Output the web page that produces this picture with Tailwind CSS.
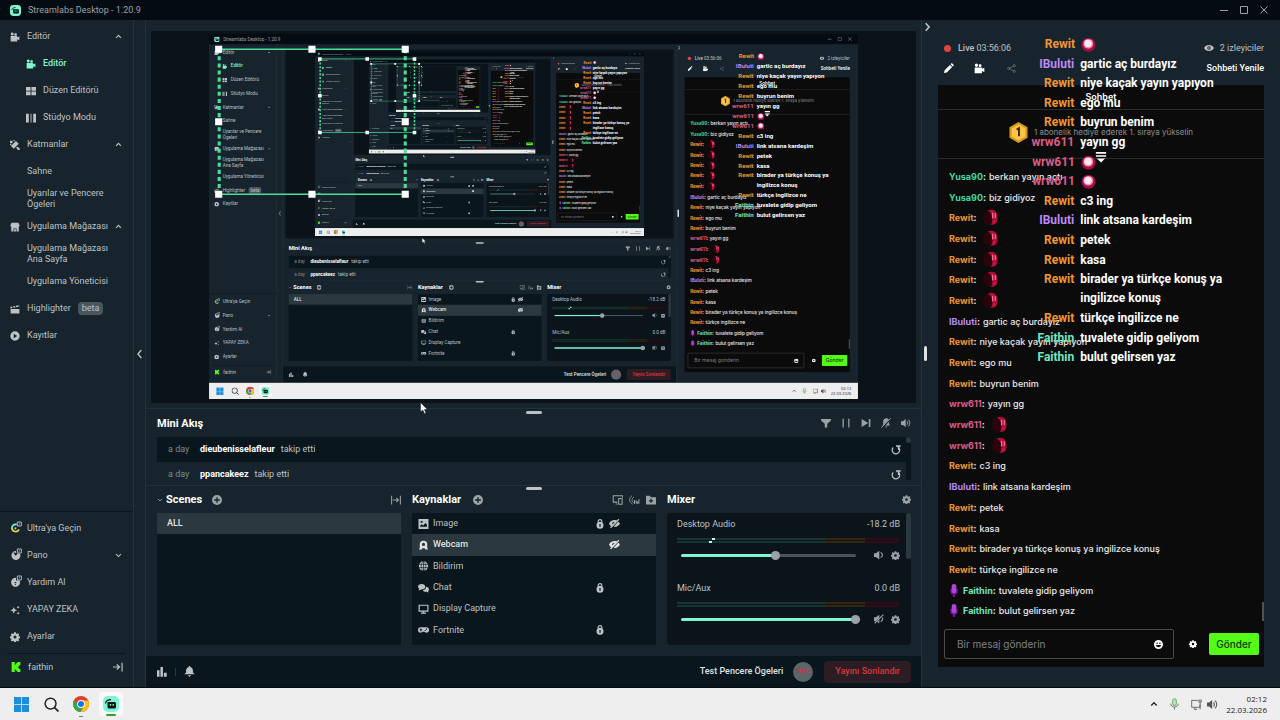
<!DOCTYPE html>
<html lang="tr">
  <head>
    <meta charset="UTF-8" />
    <meta name="viewport" content="width=device-width, initial-scale=1" />
    <title>Streamlabs Desktop</title>
    <script src="https://cdn.jsdelivr.net/npm/@tailwindcss/browser@4"></script>
  </head>
  <body class="h-screen overflow-hidden bg-[#09161d]">
    <!-- Icon set -->
    <svg class="hidden">
      <symbol id="i-camera" viewBox="0 0 16 16"><path fill="currentColor" d="M1 6.5h10.500v2l3.500-1.500v6l-3.500-1.500V15H1zM2.500 1.500h2.500v4H2.500zM7.500 2.500h3v3h-3z"/><circle cx="3.500" cy="3" r="2.300" fill="currentColor"/><circle cx="8.800" cy="3.800" r="1.900" fill="currentColor"/></symbol>
      <symbol id="i-grid" viewBox="0 0 16 16"><path fill="currentColor" d="M0 1.500h7.300v6H0zM8.700 1.500H16v6H8.700zM0 8.900h7.300v6H0zM8.700 8.900H16v6H8.700z"/></symbol>
      <symbol id="i-studio" viewBox="0 0 16 16"><path fill="currentColor" d="M0 1h4.500v14H0zM7.300 1h1.500v14H7.300zM11.500 1H16v14h-4.500z"/></symbol>
      <symbol id="i-tools" viewBox="0 0 16 16"><path fill="currentColor" d="M9.500 1.500 14 6 6 14 1.500 9.500zM0 1h4v4H0zM5.500 0h2v2h-2zM0 6.500h2v2H0zM11.500 10.500 15.500 13v3h-3l-2.500-3.500z"/></symbol>
      <symbol id="i-store" viewBox="0 0 16 16"><path fill="currentColor" d="M2.500 1h11L15.500 5.500a2 2 0 0 1-1.500 2V15h-3.500v-4.500h-5V15H2V7.500a2 2 0 0 1-1.500-2zM6.500 11.500h3V15h-3z"/></symbol>
      <symbol id="i-clap" viewBox="0 0 16 16"><path fill="currentColor" d="M1 8h14v7H1zM.5 4.500 2.800 4l1.500 2.500L1 7.200zM4.500 3.600l3-.6 1.500 2.500-3 .6zM9 2.700l3-.6 1.500 2.500-3 .6zM13 1.800l1.500-.3.700 3h-.7z"/></symbol>
      <symbol id="i-play" viewBox="0 0 16 16"><path fill="currentColor" fill-rule="evenodd" d="M8 .5a7.500 7.500 0 1 1 0 15 7.500 7.500 0 0 1 0-15zM6 4.500v7L11.500 8z"/></symbol>
      <symbol id="i-up" viewBox="0 0 16 16"><path fill="none" stroke="currentColor" stroke-width="2.600" d="m2.500 11 5.500-5.500L13.500 11"/></symbol>
      <symbol id="i-down" viewBox="0 0 16 16"><path fill="none" stroke="currentColor" stroke-width="2.400" d="M2.500 5 8 10.500 13.500 5"/></symbol>
      <symbol id="i-left" viewBox="0 0 8 16"><path fill="none" stroke="currentColor" stroke-width="2.200" d="M7 1.500 1.500 8 7 14.500"/></symbol>
      <symbol id="i-right" viewBox="0 0 8 16"><path fill="none" stroke="currentColor" stroke-width="2.600" d="M1 2l5.500 6L1 14"/></symbol>
      <symbol id="i-ultra" viewBox="0 0 18 18"><path fill="none" stroke="#80f5d2" stroke-width="2.600" d="M3 12a5.500 5.500 0 0 1 7-6.500"/><path fill="none" stroke="#ddd54e" stroke-width="2.600" d="M3 11a5.500 5.500 0 0 0 10.500 1.500"/><circle cx="8" cy="11" r="1.700" fill="currentColor"/><path fill="none" stroke="currentColor" stroke-width="1.400" d="M11 1.500h6v6h-6zM13 5.500l2-2"/></symbol>
      <symbol id="i-dash" viewBox="0 0 18 18"><path fill="currentColor" d="M9 4.500v3l-4-1 3 5 2.500-1.500-.5-1.500h5A6.700 6.700 0 1 1 9 4.500z"/><path fill="none" stroke="currentColor" stroke-width="1.400" d="M11 1.500h6v6h-6zM13 5.500l2-2"/></symbol>
      <symbol id="i-help" viewBox="0 0 18 18"><path fill="currentColor" fill-rule="evenodd" d="M9 4.300v4h5.500A6.700 6.700 0 1 1 9 4.300zM7 13v1.700h2V13zm0-1h1.700l1.500-1.500H7z"/><path fill="none" stroke="currentColor" stroke-width="1.400" d="M11 1.500h6v6h-6zM13 5.500l2-2"/></symbol>
      <symbol id="i-spark" viewBox="0 0 16 16"><path fill="currentColor" d="M6 3l1.600 3.900L11.500 8.500l-3.900 1.600L6 14l-1.600-3.900L.5 8.500l3.900-1.600zM13 1l.8 1.700 1.700.8-1.700.8L13 6l-.8-1.700-1.700-.8 1.700-.8zM13 10.500l.8 1.700 1.700.8-1.700.8-.8 1.700-.8-1.700-1.700-.8 1.700-.8z"/></symbol>
      <symbol id="i-gear" viewBox="0 0 16 16"><path fill="currentColor" fill-rule="evenodd" d="M6.600.5h2.800l.5 2 1.100.5 1.800-1.100 2 2-1.100 1.800.4 1 2 .5v2.600l-2 .5-.4 1.100 1.100 1.800-2 2-1.800-1.100-1.100.4-.5 2H6.600l-.5-2-1.100-.4-1.800 1.100-2-2 1.100-1.800-.4-1.100-2-.5V7.200l2-.5.4-1-1.100-1.800 2-2L5 3l1.100-.5zM8 5.600a2.400 2.400 0 1 0 0 4.800 2.400 2.400 0 0 0 0-4.800z"/></symbol>
      <symbol id="i-kick" viewBox="0 0 16 16"><path fill="#53fc18" d="M1 0h5v4h2V2h2V0h5v5h-2v2h-2v2h2v2h2v5h-5v-2H8v-2H6v4H1z"/></symbol>
      <symbol id="i-exit" viewBox="0 0 16 16"><path fill="none" stroke="currentColor" stroke-width="1.900" d="M0 8h10M6 4l4.500 4L6 12M14.500 1v14"/></symbol>
      <symbol id="i-filter" viewBox="0 0 16 16"><path fill="currentColor" d="M0 1.500h16v2.300L10 9v6H6V9L0 3.800z"/></symbol>
      <symbol id="i-pause" viewBox="0 0 16 16"><path fill="currentColor" d="M2.500 1h2v14h-2zM11.500 1h2v14h-2z"/></symbol>
      <symbol id="i-next" viewBox="0 0 16 16"><path fill="currentColor" d="M1 1.500 11.500 8 1 14.500zM12.500 1.500H15v13h-2.500z"/></symbol>
      <symbol id="i-mute" viewBox="0 0 16 16"><path fill="currentColor" d="M3 12 12.500 2.500A5 5 0 0 0 3.500 6v3.500L2 12zM7 12l6-6v4l1.500 2zM6.500 13.500h4L8.500 15.500z"/><path stroke="currentColor" stroke-width="1.500" d="M.5 15.500l15-15"/></symbol>
      <symbol id="i-sound" viewBox="0 0 16 16"><path fill="currentColor" d="M0 5h3l4.500-3.500v13L3 11H0z"/><path fill="none" stroke="currentColor" stroke-width="1.500" d="M9.500 5a4.500 4.500 0 0 1 0 6M11.500 2.500a7 7 0 0 1 0 11"/></symbol>
      <symbol id="i-replay" viewBox="0 0 16 16"><path fill="none" stroke="currentColor" stroke-width="2" d="M3.500 4A6 6 0 1 0 11 3"/><path fill="currentColor" d="M8 .5h7.500v2.300h-2.300V8H11V2.800H8z"/></symbol>
      <symbol id="i-plus" viewBox="0 0 16 16"><path fill="currentColor" fill-rule="evenodd" d="M8 0a8 8 0 1 1 0 16A8 8 0 0 1 8 0zM6.900 3.500v3.400H3.500v2.200h3.400v3.400h2.200V9.100h3.400V6.900H9.100V3.500z"/></symbol>
      <symbol id="i-fit" viewBox="0 0 16 16"><path fill="none" stroke="currentColor" stroke-width="1.700" d="M1 1v14M15 1v14M3 8h8M8.500 4.500 12 8l-3.500 3.500"/></symbol>
      <symbol id="i-image" viewBox="0 0 16 16"><path fill="currentColor" fill-rule="evenodd" d="M0 0h16v16H0zM2.500 12.500h11V9L11 6.500l-3.500 4L5 8.500l-2.500 2.500zM3.500 3v3h3V3z"/></symbol>
      <symbol id="i-webcam" viewBox="0 0 16 16"><path fill="currentColor" fill-rule="evenodd" d="M8 1a6 6 0 0 1 6 6v6l1 1v1h-4l-1-2H6l-1 2H1v-1l1-1V7a6 6 0 0 1 6-6zm0 3.500a2.600 2.600 0 1 0 0 5.200 2.600 2.600 0 0 0 0-5.200z"/></symbol>
      <symbol id="i-globe" viewBox="0 0 16 16"><circle cx="8" cy="8" r="7.500" fill="currentColor"/><path fill="none" stroke="#09161d" d="M0 5.500h16M0 10.500h16M8 0v16M8 0c-5 5-5 11 0 16M8 0c5 5 5 11 0 16"/></symbol>
      <symbol id="i-chat" viewBox="0 0 18 16"><path fill="currentColor" d="M6 1.500c3.500 0 6 2 6 4.500s-2.500 4.500-6 4.500L1 12l1-2.700A4 4 0 0 1 0 6c0-2.500 2.500-4.500 6-4.500zM13.300 6c2.700 0 4.700 1.700 4.700 4 0 1.300-.6 2.400-1.500 3.100l1 2.400-4-1.200c-3 0-5-1.200-5.500-2.800 3.500-.5 5.300-2.500 5.300-5.500z"/></symbol>
      <symbol id="i-monitor" viewBox="0 0 16 16"><path fill="none" stroke="currentColor" stroke-width="1.900" d="M1 2h14v9.500H1zM4 14.500h8M8 11v3.500"/></symbol>
      <symbol id="i-pad" viewBox="0 0 18 16"><path fill="currentColor" fill-rule="evenodd" d="M4.500 3.500h9a4.500 4.500 0 0 1 0 9c-1.500 0-2-1.500-3-1.500h-3c-1 0-1.500 1.500-3 1.500a4.500 4.500 0 0 1 0-9zM4 5.500V7H2.500v1.600H4V10h1.600V8.600H7V7H5.600V5.500zM11 8v1.700h1.700V8zM13 5.700v1.700h1.700V5.700z"/></symbol>
      <symbol id="i-lock" viewBox="0 0 14 16"><path fill="none" stroke="currentColor" stroke-width="1.800" d="M4 6V4a3 3 0 0 1 6 0v2"/><path fill="currentColor" fill-rule="evenodd" d="M7 4.500a5.600 5.600 0 1 1 0 11.200 5.600 5.600 0 0 1 0-11.200zM6 8v4.300h2V8z"/></symbol>
      <symbol id="i-hide" viewBox="0 0 16 16"><path fill="currentColor" fill-rule="evenodd" d="M0 8c2-4 6-6 11-4.500L14 1l1 1.500L3 15 1.500 14l1.700-2C1.700 11 .5 9.700 0 8zM7.500 5.300a3 3 0 0 0-2.600 4L6.300 8A1.500 1.500 0 0 1 8 6.500zM13.300 5.500C14.500 6.300 15.600 7 16 8c-2 4-5.500 5.400-9.300 4.800z"/></symbol>
      <symbol id="i-screens" viewBox="0 0 18 16"><path fill="none" stroke="currentColor" stroke-width="1.700" d="M9 11.500H2V1h15v3M6 14.500h3M11 5.500h5.500v9.500H11z"/></symbol>
      <symbol id="i-wave" viewBox="0 0 18 16"><path fill="none" stroke="currentColor" stroke-width="1.300" d="M5 1C-1 4 0 12 6 15M8 3.500C4 5 4 11 7.500 12.500"/><path fill="currentColor" d="M8 8h2v6H8zM11 9h1.500v5H11zM13 10h2v4h-2zM15.500 6.500H17V14h-1.500z"/></symbol>
      <symbol id="i-folder" viewBox="0 0 16 16"><path fill="currentColor" fill-rule="evenodd" d="M0 1h6l2 2.500h8V15H0zM7 6v2.300H4.700v2H7v2.200h2v-2.200h2.300v-2H9V6z"/></symbol>
      <symbol id="i-speaker" viewBox="0 0 16 16"><path fill="currentColor" d="M0 5h3l5.500-4v14L3 11H0z"/><path fill="none" stroke="currentColor" stroke-width="1.700" d="M10.500 4c4 1 4 7 0 8"/></symbol>
      <symbol id="i-nospeaker" viewBox="0 0 16 16"><path fill="currentColor" d="M0 5h3l5.500-4v5L2.500 12 0 11zM5 12.500l3.500-3.500v6z"/><path fill="none" stroke="currentColor" stroke-width="1.900" d="M1 15 15 1M10.500 12c3.500-1 4-4 2.800-6"/></symbol>
      <symbol id="i-bars" viewBox="0 0 16 16"><path fill="currentColor" d="M0 5h4v10.500H0zM5.500 0h4v15.500h-4zM11 9h4.500v6.500H11z"/></symbol>
      <symbol id="i-bell" viewBox="0 0 16 16"><path fill="currentColor" d="M7 0h2v1.500A5 5 0 0 1 13 6v3.500l2.500 2.500H.5L3 9.500V6a5 5 0 0 1 4-4.500zM5.500 13.500h5L8 16z"/></symbol>
      <symbol id="i-eye" viewBox="0 0 16 16"><path fill="currentColor" fill-rule="evenodd" d="M0 8c3-6.500 13-6.500 16 0-3 6.500-13 6.500-16 0zm8-2.800a2.800 2.800 0 1 0 0 5.600 2.800 2.800 0 0 0 0-5.600z"/><circle cx="8" cy="8" r="1.300" fill="currentColor"/></symbol>
      <symbol id="i-pencil" viewBox="0 0 16 16"><path fill="currentColor" d="M0 16l1-4.500 8.500-8.500L13 6.500 4.500 15zM10.500 2 12.500 0 16 3.500 14 5.500z"/></symbol>
      <symbol id="i-share" viewBox="0 0 16 16"><path fill="none" stroke="currentColor" stroke-width="1.400" d="M12 3.500 3.500 8l8.500 4.500"/><g fill="none" stroke="currentColor" stroke-width="1.400"><circle cx="13" cy="3" r="2"/><circle cx="3" cy="8" r="2"/><circle cx="13" cy="13" r="2"/></g></symbol>
      <symbol id="i-medal" viewBox="0 0 20 22"><path fill="#d99a1c" d="m10 0 9.500 5.500v11L10 22 .5 16.500v-11z"/><path fill="#fcc449" d="m10 2.500 7.200 4.200v8.600L10 19.500l-7.200-4.200V6.700z"/><path fill="none" stroke="#3a2a08" stroke-width="2" d="M8 8l2.500-1.500V15"/></symbol>
      <symbol id="i-jump" viewBox="0 0 12 12"><path fill="currentColor" d="M0 0h12v2H0zM0 3.500h12v1.800H0zM1.500 7h9L6 11.500z"/></symbol>
      <symbol id="i-smile" viewBox="0 0 16 16"><path fill="currentColor" fill-rule="evenodd" d="M8 0a8 8 0 1 1 0 16A8 8 0 0 1 8 0zM4.500 4.500v2.600h2V4.500zM9.500 4.500v2.600h2V4.500zM3.500 9c1 5.300 8 5.300 9 0z"/></symbol>
      <symbol id="i-mic" viewBox="0 0 10 14"><path fill="#6d1790" d="M1 5h8v3c0 2-1.200 3-2.700 3.300V14H3.700v-2.700C2.200 11 1 10 1 8z"/><rect x="2.500" width="5" height="10" rx="2.500" fill="#b044d8"/></symbol>
      <symbol id="i-emote" viewBox="0 0 16 18"><ellipse cx="6.500" cy="9" rx="6.500" ry="8" fill="#2a030b"/><path fill="#b00d38" d="M5 1.500C12-1 15.500 3 15.500 9S13 17.500 8 16.500c2-1 2.500-4 2-7.500S8 3 5 1.500z"/><path fill="#f56d90" d="M9.500 4H11v6H9.500zM12.500 4.500h1.300v5h-1.300z"/><path fill="#d41447" d="M10 12l4 .5-3 3z"/></symbol>
      <symbol id="i-orb" viewBox="0 0 16 16"><circle cx="8" cy="8.300" r="7.500" fill="#a30d43"/><circle cx="7.800" cy="7.300" r="5.300" fill="#f080ab"/><circle cx="7.500" cy="6.800" r="4" fill="#fde8f0"/></symbol>
      <symbol id="i-slobs" viewBox="0 0 16 16"><rect width="16" height="16" rx="5" fill="#80f5d2"/><path fill="#09161d" d="M5 6h6.500A1.500 1.500 0 0 1 13 7.500V11a1.500 1.500 0 0 1-1.500 1.500H6A1.500 1.500 0 0 1 4.500 11V6z"/><path fill="none" stroke="#09161d" stroke-width="1.200" d="M2.500 7.500C3 5 5 3.700 8 3.700"/><path fill="#80f5d2" d="M6.800 8h1.300v1.800H6.800zM9.600 8h1.300v1.800H9.600z"/></symbol>
      <symbol id="i-windows" viewBox="0 0 16 16"><path fill="#1e8fdc" d="M0 0h7.600v7.600H0zM8.400 0H16v7.600H8.400zM0 8.400h7.600V16H0zM8.400 8.400H16V16H8.400z"/></symbol>
      <symbol id="i-search" viewBox="0 0 16 16"><circle cx="7" cy="7" r="5.800" fill="none" stroke="currentColor" stroke-width="1.600"/><path stroke="currentColor" stroke-width="1.800" d="m11 11 4.500 4.500"/></symbol>
      <symbol id="i-chrome" viewBox="0 0 16 16"><circle cx="8" cy="8" r="8" fill="#e33b2e"/><path fill="#fbc116" d="M8 4.500h7.200A8 8 0 0 1 7.500 16L11 9.800z"/><path fill="#2da94f" d="M1.200 4 5 9.800 8 11.500l1.500.3L7.500 16A8 8 0 0 1 1.200 4z"/><circle cx="8" cy="8" r="3.900" fill="#fff"/><circle cx="8" cy="8" r="3" fill="#1a73e8"/></symbol>
      <symbol id="i-traymic" viewBox="0 0 12 16"><rect x="3.500" y="1" width="5" height="9" rx="2.500" fill="#bfe3c2" stroke="#4a9a52"/><path fill="none" stroke="#555" d="M1 7.500c0 6 10 6 10 0M6 12v3.500"/></symbol>
      <symbol id="i-net" viewBox="0 0 16 16"><path fill="none" stroke="currentColor" stroke-width="1.200" d="M10 2H1v10h12V8M4 15h5M5.500 12v3M11.500 1.500h3.500v3h-3.500zM13.300 4.500V15"/></symbol>
    </svg>

    <div id="app" class="relative flex h-full flex-col bg-[#17242d] font-[Roboto,sans-serif] text-[9px] leading-[11px] text-[#bdc2c4]">
      <!-- Title bar -->
      <header class="flex h-5 shrink-0 items-center justify-between bg-[#050b12] pr-3 pl-[10px] text-[#9da1a4]">
        <div class="flex items-center gap-[7px]">
          <svg class="size-[11px]"><use href="#i-slobs" /></svg>
          <span>Streamlabs Desktop - 1.20.9</span>
        </div>
        <div class="flex gap-3">
          <button aria-label="Simge durumuna küçült"><svg class="size-2" viewBox="0 0 8 8"><path stroke="currentColor" d="M0 4.500h8" /></svg></button>
          <button aria-label="Ekranı kapla"><svg class="size-2" viewBox="0 0 8 8"><path fill="none" stroke="currentColor" d="M.5.500h7v7h-7z" /></svg></button>
          <button aria-label="Kapat"><svg class="size-2" viewBox="0 0 8 8"><path stroke="currentColor" d="m.5.500 7 7m0-7-7 7" /></svg></button>
        </div>
      </header>

      <div class="flex min-h-0 flex-1 border-b border-[#050b12]">
        <!-- Sidebar -->
        <nav class="flex w-[134px] shrink-0 flex-col justify-between border-r border-[#25323a] pt-[3px]">
          <div>
            <button class="flex h-[27px] w-full items-center gap-[7px] pr-[11px] pl-[10px]"><svg class="size-[10px]"><use href="#i-camera" /></svg><span class="flex-1 text-left">Editör</span><svg class="size-[7px]"><use href="#i-up" /></svg></button>
            <a href="#" class="flex h-[27px] items-center gap-[7px] pl-[26px] font-medium text-[#80f5d2]"><svg class="size-[10px]"><use href="#i-camera" /></svg>Editör</a>
            <a href="#" class="flex h-[27px] items-center gap-[7px] pl-[26px]"><svg class="size-[10px]"><use href="#i-grid" /></svg>Düzen Editörü</a>
            <a href="#" class="flex h-[27px] items-center gap-[7px] pl-[26px]"><svg class="size-[10px]"><use href="#i-studio" /></svg>Stüdyo Modu</a>
            <button class="flex h-[27px] w-full items-center gap-[7px] pr-[11px] pl-[10px]"><svg class="size-[10px]"><use href="#i-tools" /></svg><span class="flex-1 text-left">Katmanlar</span><svg class="size-[7px]"><use href="#i-up" /></svg></button>
            <a href="#" class="flex h-[27px] items-center pl-[27px]">Sahne</a>
            <a href="#" class="flex h-7 items-center pr-5 pl-[27px]">Uyarılar ve Pencere Ögeleri</a>
            <button class="flex h-[27px] w-full items-center gap-[7px] pr-[11px] pl-[10px] whitespace-nowrap"><svg class="size-[10px] shrink-0"><use href="#i-store" /></svg><span class="min-w-0 flex-1 text-left">Uygulama Mağazası</span><svg class="size-[7px] shrink-0"><use href="#i-up" /></svg></button>
            <a href="#" class="flex h-7 items-center pr-5 pl-[27px]">Uygulama Mağazası Ana Sayfa</a>
            <a href="#" class="flex h-[27px] items-center pl-[27px]">Uygulama Yöneticisi</a>
            <a href="#" class="flex h-[27px] items-center gap-[7px] pl-[10px]"><svg class="size-[10px]"><use href="#i-clap" /></svg>Highlighter<span class="rounded-sm bg-[#4a565d] px-1 py-px">beta</span></a>
            <a href="#" class="flex h-[27px] items-center gap-[7px] pl-[10px]"><svg class="size-[10px]"><use href="#i-play" /></svg>Kayıtlar</a>
          </div>
          <div class="border-t border-[#09161d] pt-[3px] pb-[7px]">
            <a href="#" class="flex h-[27px] items-center gap-[5px] pl-[10px]"><svg class="mb-1 size-3"><use href="#i-ultra" /></svg>Ultra'ya Geçin</a>
            <button class="flex h-[27px] w-full items-center gap-[5px] pr-[11px] pl-[10px]"><svg class="mb-1 size-3"><use href="#i-dash" /></svg><span class="flex-1 text-left">Pano</span><svg class="size-[7px]"><use href="#i-down" /></svg></button>
            <a href="#" class="flex h-[27px] items-center gap-[5px] pl-[10px]"><svg class="mb-1 size-3"><use href="#i-help" /></svg>Yardım Al</a>
            <a href="#" class="flex h-[27px] items-center gap-[7px] pl-[10px]"><svg class="size-[10px]"><use href="#i-spark" /></svg>YAPAY ZEKA</a>
            <a href="#" class="flex h-[27px] items-center gap-[7px] pl-[10px]"><svg class="size-[10px]"><use href="#i-gear" /></svg>Ayarlar</a>
            <button class="mx-[7px] mt-[3px] flex h-[27px] w-[119px] items-center gap-[7px] border-t border-[#09161d] pr-[3px] pl-1"><svg class="size-[10px]"><use href="#i-kick" /></svg><span class="flex-1 text-left">faithin</span><svg class="size-[10px]"><use href="#i-exit" /></svg></button>
          </div>
        </nav>
        <button class="flex w-3 shrink-0 items-center justify-center border-r border-[#25323a]" aria-label="Menüyü daralt"><svg class="h-[10px] w-[5px]"><use href="#i-left" /></svg></button>

        <!-- Editor -->
        <main class="flex min-w-0 flex-1 flex-col">
          <section class="flex min-h-0 flex-1 px-[5px] pt-[11px] pb-[5px]">
            <div class="flex min-h-0 flex-1 bg-[#0a131a] pt-[3px] pb-1">
              <svg class="min-h-0 w-full" viewBox="0 0 1280 720">
                <foreignObject class="capture" width="1280" height="720"></foreignObject>
                <g fill="none" stroke="#4ade96" stroke-width="4">
                  <path d="M19 30h368M19 316h368" stroke-width="3" />
                  <path d="M20 30v286M387 30v286" stroke-width="6" stroke-dasharray="8 6" />
                </g>
                <path fill="#fff" d="M12 23h14v14H12zM196 23h14v14h-14zM380 23h14v14h-14zM12 166h14v14H12zM380 166h14v14h-14zM12 309h14v14H12zM196 309h14v14h-14zM380 309h14v14h-14z" />
              </svg>
            </div>
          </section>

          <section class="flex h-[77px] shrink-0 flex-col border-t border-[#22303a] pr-[10px] pl-[11px]">
            <div class="mx-auto mt-[2px] h-[3px] w-4 shrink-0 rounded-sm bg-[#bdc2c4]"></div>
            <div class="mb-[5px] flex h-[18px] shrink-0 items-center justify-between text-[#9ba2a6]">
              <h2 class="text-[11px] font-bold text-white">Mini Akış</h2>
              <div class="flex gap-[10px]">
                <button aria-label="Filtrele"><svg class="size-[10px]"><use href="#i-filter" /></svg></button>
                <button aria-label="Duraklat"><svg class="size-[10px]"><use href="#i-pause" /></svg></button>
                <button aria-label="Atla"><svg class="size-[10px]"><use href="#i-next" /></svg></button>
                <button aria-label="Bildirimleri sustur"><svg class="size-[10px]"><use href="#i-mute" /></svg></button>
                <button aria-label="Ses"><svg class="size-[10px]"><use href="#i-sound" /></svg></button>
              </div>
            </div>
            <div class="flex min-h-0 flex-1 pb-[5px]">
              <div class="min-w-0 flex-1 overflow-hidden">
                <div class="flex h-[25px] items-center bg-[#09161d] pr-[5px] pl-[11px]"><span class="w-8 text-[#7f888c]">a day</span><b class="mr-[6px] font-bold text-white">dieubenisselafleur</b><span class="flex-1">takip etti</span><button aria-label="Tekrar oynat"><svg class="size-[10px]"><use href="#i-replay" /></svg></button></div>
                <div class="flex h-[25px] items-center pr-[5px] pl-[11px]"><span class="w-8 text-[#7f888c]">a day</span><b class="mr-[6px] font-bold text-white">ppancakeez</b><span class="flex-1">takip etti</span><button aria-label="Tekrar oynat"><svg class="size-[10px]"><use href="#i-replay" /></svg></button></div>
              </div>
              <div class="w-[5px] bg-[#09161d]"><div class="h-[6px] rounded-full bg-[#2b383f]"></div></div>
            </div>
          </section>

          <section class="flex shrink-0 flex-col border-t border-[#22303a] pr-[10px] pb-[11px] pl-[11px]">
            <div class="mx-auto mt-px h-[3px] w-4 rounded-sm bg-[#bdc2c4]"></div>
            <div class="grid grid-cols-3 gap-[11px]">
              <div>
                <div class="mb-1 flex h-[19px] items-center text-[#9ba2a6]">
                  <svg class="mr-[3px] size-[6px]"><use href="#i-down" /></svg>
                  <h2 class="mr-[10px] text-[11px] font-bold text-white">Scenes</h2>
                  <button aria-label="Sahne ekle"><svg class="size-[10px]"><use href="#i-plus" /></svg></button>
                  <button class="ml-auto" aria-label="Geçişler"><svg class="size-[10px]"><use href="#i-fit" /></svg></button>
                </div>
                <div class="h-[132px] rounded-xs bg-[#09161d]">
                  <button class="h-[21px] w-full bg-[#2b383f] pl-[10px] text-left font-medium text-[#dfe2e3]">ALL</button>
                </div>
              </div>

              <div>
                <div class="mb-1 flex h-[19px] items-center text-[#9ba2a6]">
                  <h2 class="mr-3 text-[11px] font-bold text-white">Kaynaklar</h2>
                  <button aria-label="Kaynak ekle"><svg class="size-[10px]"><use href="#i-plus" /></svg></button>
                  <div class="ml-auto flex gap-[6px]">
                    <button aria-label="Ekranlar"><svg class="h-[10px] w-[11px]"><use href="#i-screens" /></svg></button>
                    <button aria-label="Ses kaynakları"><svg class="h-[10px] w-[11px]"><use href="#i-wave" /></svg></button>
                    <button aria-label="Klasör ekle"><svg class="size-[10px]"><use href="#i-folder" /></svg></button>
                  </div>
                </div>
                <ul class="flex h-[132px] flex-col rounded-xs bg-[#09161d] pb-1">
                  <li class="flex flex-1 items-center pl-[6px]"><svg class="mr-1 h-[10px] w-[11px]"><use href="#i-image" /></svg><span class="flex-1">Image</span><svg class="mr-1 size-[10px]"><use href="#i-lock" /></svg><svg class="mr-9 size-[11px]"><use href="#i-hide" /></svg></li>
                  <li class="flex flex-1 items-center bg-[#2b383f] pl-[6px] font-medium text-[#dfe2e3]"><svg class="mr-1 h-[10px] w-[11px]"><use href="#i-webcam" /></svg><span class="flex-1">Webcam</span><svg class="mr-9 size-[11px]"><use href="#i-hide" /></svg></li>
                  <li class="flex flex-1 items-center pl-[6px]"><svg class="mr-1 h-[10px] w-[11px]"><use href="#i-globe" /></svg>Bildirim</li>
                  <li class="flex flex-1 items-center pl-[6px]"><svg class="mr-1 h-[10px] w-[11px]"><use href="#i-chat" /></svg><span class="flex-1">Chat</span><svg class="mr-[51px] size-[10px]"><use href="#i-lock" /></svg></li>
                  <li class="flex flex-1 items-center pl-[6px]"><svg class="mr-1 h-[10px] w-[11px]"><use href="#i-monitor" /></svg>Display Capture</li>
                  <li class="flex flex-1 items-center pl-[6px]"><svg class="mr-1 h-[10px] w-[11px]"><use href="#i-pad" /></svg><span class="flex-1">Fortnite</span><svg class="mr-[51px] size-[10px]"><use href="#i-lock" /></svg></li>
                </ul>
              </div>

              <div>
                <div class="mb-1 flex h-[19px] items-center justify-between text-[#9ba2a6]">
                  <h2 class="text-[11px] font-bold text-white">Mixer</h2>
                  <button aria-label="Mikser ayarları"><svg class="size-[9px]"><use href="#i-gear" /></svg></button>
                </div>
                <div class="flex h-[132px] rounded-sm bg-[#0a141a]">
                  <div class="flex-1 pr-[6px] pl-[10px]">
                    <div class="h-16 pt-[6px]">
                      <div class="flex justify-between"><span>Desktop Audio</span><span>-18.2 dB</span></div>
                      <div class="relative mt-2 mr-px flex h-[5px] flex-col justify-between">
                        <div class="flex h-[2px]"><i class="w-2/3 bg-[#17362f]"></i><i class="w-[18%] bg-[#33260d]"></i><i class="flex-1 bg-[#330b17]"></i></div>
                        <div class="flex h-[2px]"><i class="w-2/3 bg-[#17362f]"></i><i class="w-[18%] bg-[#33260d]"></i><i class="flex-1 bg-[#330b17]"></i></div>
                        <i class="absolute top-0 left-[35px] h-[2px] w-[3px] bg-[#b9fbe6]"></i>
                        <i class="absolute bottom-0 left-8 h-[2px] w-[3px] bg-[#b9fbe6]"></i>
                      </div>
                      <div class="mt-[7px] flex items-center text-[#9ba2a6]">
                        <input type="range" value="54" aria-label="Desktop Audio" class="mr-[18px] ml-1 h-[3px] min-w-0 flex-1 appearance-none rounded-full bg-[#4a545a] bg-[linear-gradient(#80f5d2,#80f5d2)] bg-[length:54%_100%] bg-no-repeat [&::-webkit-slider-thumb]:size-[9px] [&::-webkit-slider-thumb]:appearance-none [&::-webkit-slider-thumb]:rounded-full [&::-webkit-slider-thumb]:bg-[#9ba2a6]" />
                        <button class="mr-[7px]" aria-label="Sesi kapat"><svg class="size-[10px]"><use href="#i-speaker" /></svg></button>
                        <button aria-label="Ayarlar"><svg class="size-[9px]"><use href="#i-gear" /></svg></button>
                      </div>
                    </div>
                    <div class="h-16 pt-[6px]">
                      <div class="flex justify-between"><span>Mic/Aux</span><span>0.0 dB</span></div>
                      <div class="mt-2 mr-px flex h-[5px] flex-col justify-between">
                        <div class="flex h-[2px]"><i class="w-2/3 bg-[#17362f]"></i><i class="w-[18%] bg-[#33260d]"></i><i class="flex-1 bg-[#330b17]"></i></div>
                        <div class="flex h-[2px]"><i class="w-2/3 bg-[#17362f]"></i><i class="w-[18%] bg-[#33260d]"></i><i class="flex-1 bg-[#330b17]"></i></div>
                      </div>
                      <div class="mt-[7px] flex items-center text-[#9ba2a6]">
                        <input type="range" value="100" aria-label="Mic/Aux" class="mr-[14px] ml-1 h-[3px] min-w-0 flex-1 appearance-none rounded-full bg-[#80f5d2] [&::-webkit-slider-thumb]:size-[9px] [&::-webkit-slider-thumb]:appearance-none [&::-webkit-slider-thumb]:rounded-full [&::-webkit-slider-thumb]:bg-[#9ba2a6]" />
                        <button class="mr-[7px]" aria-label="Sesi aç"><svg class="size-[10px]"><use href="#i-nospeaker" /></svg></button>
                        <button aria-label="Ayarlar"><svg class="size-[9px]"><use href="#i-gear" /></svg></button>
                      </div>
                    </div>
                  </div>
                  <div class="h-[46px] w-[5px] rounded-full bg-[#2b383f]"></div>
                </div>
              </div>
            </div>
          </section>

          <footer class="flex h-[31px] shrink-0 items-center bg-[#09161d] pr-[10px] pl-[11px]">
            <button aria-label="Performans"><svg class="size-[10px]"><use href="#i-bars" /></svg></button>
            <span class="mx-2 h-2 w-px bg-[#2b383f]"></span>
            <button aria-label="Bildirimler"><svg class="size-[11px]"><use href="#i-bell" /></svg></button>
            <button class="mr-[10px] ml-auto font-medium text-[#dfe2e3]">Test Pencere Ögeleri</button>
            <button class="mr-[11px] size-5 rounded-full bg-[#5b666b] text-[7px] font-medium text-[#c0393f]">REC</button>
            <button class="h-[22px] rounded-sm bg-[#2c1c24] px-[11px] font-medium text-[#d63a3f]">Yayını Sonlandır</button>
          </footer>
        </main>

        <!-- Live chat -->
        <aside class="relative flex w-[359px] shrink-0 flex-col border-l border-[#25323a] pr-4 pb-5 pl-4">
          <button class="absolute top-[2px] left-[3px]" aria-label="Sohbeti daralt"><svg class="h-[10px] w-[5px]"><use href="#i-right" /></svg></button>
          <div class="absolute top-[326px] left-[2px] h-[15px] w-[3px] rounded-sm bg-[#dfe2e3]"></div>
          <div class="mt-[18px] flex h-5 items-center pl-[6px]">
            <span class="mr-[7px] size-[7px] rounded-full bg-[#e0443f]"></span><span class="mr-[2px] font-medium">Live</span><span>03:56:06</span>
            <svg class="mr-[6px] ml-auto size-[10px]"><use href="#i-eye" /></svg><span>2 izleyiciler</span>
          </div>
          <div class="flex h-5 items-center pl-[6px] text-white">
            <button class="mr-5" aria-label="Düzenle"><svg class="size-[10px]"><use href="#i-pencil" /></svg></button>
            <button class="mr-[22px]" aria-label="Klip"><svg class="size-[11px]"><use href="#i-camera" /></svg></button>
            <button class="text-[#6c777c]" aria-label="Paylaş"><svg class="size-[9px]"><use href="#i-share" /></svg></button>
            <button class="ml-auto font-medium">Sohbeti Yenile</button>
          </div>
          <div class="mt-[7px] flex min-h-0 flex-1 flex-col bg-[#0b0b0c] font-[Inter,sans-serif] text-white">
            <h2 class="h-[25px] shrink-0 border-b border-[#2a2c2e] pt-[6px] text-center font-semibold">Sohbet</h2>
            <div class="relative flex h-[49px] shrink-0 items-center justify-center gap-[6px] border-b border-[#2a2c2e] pb-1 text-[8px] text-[#8c8f92]">
              <svg class="h-[21px] w-[19px]"><use href="#i-medal" /></svg>
              <span>1 abonelik hediye ederek 1. sıraya yükselin</span>
              <svg class="absolute -bottom-[5px] left-1/2 size-[11px] -translate-x-1/2 text-white"><use href="#i-jump" /></svg>
            </div>
            <div class="flex min-h-0 flex-1 pt-[7px] pb-2">
              <ul class="chat flex flex-1 flex-col pl-[11px] text-[#ebebeb]"></ul>
              <div class="h-[19px] w-[2px] self-end bg-[#505356]"></div>
            </div>
            <form class="flex h-[38px] shrink-0 items-center pr-[5px] pb-2 pl-[6px] text-[10px]">
              <label class="flex h-[30px] flex-1 items-center rounded-xs border border-[#474b4e] pr-[10px] pl-3"><input type="text" aria-label="Mesaj" placeholder="Bir mesaj gönderin" class="min-w-0 flex-1 placeholder:text-[#7d8184]" /><svg class="size-[9px]"><use href="#i-smile" /></svg></label>
              <button type="button" class="mr-3 ml-[15px]" aria-label="Sohbet ayarları"><svg class="size-2"><use href="#i-gear" /></svg></button>
              <button type="button" class="h-[22px] w-[50px] rounded-xs bg-[#53fc18] font-medium text-[#123a06]">Gönder</button>
            </form>
          </div>
          <!-- Chat box overlay on top of the desktop -->
          <ul class="overlay pointer-events-none absolute top-[15px] left-[100px] flex h-[333px] w-52 flex-col text-[12px] leading-[19px] font-bold text-white"></ul>
        </aside>
      </div>

      <!-- Windows taskbar -->
      <footer class="flex h-8 shrink-0 items-center bg-[#eeeeee] pr-[13px] pl-[14px] text-[#222]">
        <button class="mr-[15px]" aria-label="Başlat"><svg class="size-[15px]"><use href="#i-windows" /></svg></button>
        <button class="mr-[14px]" aria-label="Ara"><svg class="size-[15px]"><use href="#i-search" /></svg></button>
        <button class="relative mr-[10px]" aria-label="Chrome"><svg class="size-4"><use href="#i-chrome" /></svg><span class="absolute -bottom-[5px] left-[6px] h-px w-1 bg-[#777]"></span></button>
        <button class="relative flex size-6 items-center justify-center rounded-sm bg-[#f8faf9]" aria-label="Streamlabs"><svg class="size-4"><use href="#i-slobs" /></svg><span class="absolute bottom-0 left-[7px] h-[2px] w-[10px] rounded-full bg-[#3a9a2c]"></span></button>
        <svg class="mr-3 ml-auto size-2"><use href="#i-up" /></svg>
        <svg class="mr-3 h-3 w-[9px]"><use href="#i-traymic" /></svg>
        <svg class="mr-[5px] size-[11px] text-[#555]"><use href="#i-net" /></svg>
        <svg class="mr-2 size-[11px] text-[#555]"><use href="#i-sound" /></svg>
        <div class="text-right text-[8px] leading-[11px] font-[Open_Sans,sans-serif]">02:12<br />22.03.2026</div>
      </footer>

      <!-- Mouse pointer -->
      <svg class="absolute top-[402px] left-[420px] h-3 w-2" viewBox="0 0 8 12"><path fill="#fff" stroke="#111" stroke-width=".5" d="M.5.500v9.500l2.200-2L4.500 11.700l1.500-.7-1.600-3.500h3z" /></svg>
    </div>

    <script>
      const colors = {
        Rewit: "text-[#f2962e]",
        IBuluti: "text-[#b98af5]",
        wrw611: "text-[#dd5c86]",
        Yusa90: "text-[#3fd9a4]",
        Faithin: "text-[#6fe8c0]",
      };

      // an empty text stands for an emote
      const messages = [
        ["Yusa90", "berkan yayın açtı"],
        ["Yusa90", "biz gidiyoz"],
        ["Rewit", ""],
        ["Rewit", ""],
        ["Rewit", ""],
        ["Rewit", ""],
        ["Rewit", ""],
        ["IBuluti", "gartic aç burdayız"],
        ["Rewit", "niye kaçak yayın yapıyon"],
        ["Rewit", "ego mu"],
        ["Rewit", "buyrun benim"],
        ["wrw611", "yayın gg"],
        ["wrw611", ""],
        ["wrw611", ""],
        ["Rewit", "c3 ing"],
        ["IBuluti", "link atsana kardeşim"],
        ["Rewit", "petek"],
        ["Rewit", "kasa"],
        ["Rewit", "birader ya türkçe konuş ya ingilizce konuş"],
        ["Rewit", "türkçe ingilizce ne"],
        ["Faithin", "tuvalete gidip geliyom"],
        ["Faithin", "bulut gelirsen yaz"],
      ];

      const app = document.getElementById("app");

      app.querySelector(".chat").innerHTML = messages
        .map(([name, text]) => {
          const badge = name === "Faithin" ? '<svg class="mr-1 h-[13px] w-[10px]"><use href="#i-mic"/></svg>' : "";
          const body = text ? `<span class="font-medium">${text}</span>` : '<svg class="ml-1 h-[17px] w-[15px]"><use href="#i-emote"/></svg>';
          return `<li class="flex min-h-0 flex-1 items-center">${badge}<b class="font-bold ${colors[name]}">${name}</b><b class="mr-[3px] font-bold">:</b>${body}</li>`;
        })
        .join("");

      app.querySelector(".overlay").innerHTML = messages
        .slice(6)
        .map(([name, text]) => {
          const body = text ? `<span class="w-[152px]">${text}</span>` : '<svg class="mt-[2px] size-[15px]"><use href="#i-orb"/></svg>';
          const grow = text.length > 26 ? "flex-[2]" : "flex-1";
          return `<li class="flex min-h-0 ${grow} gap-[6px]"><span class="w-[53px] text-right ${colors[name]}">${name}</span>${body}</li>`;
        })
        .join("");

      // the captured screen shows itself, a few levels deep
      const screen = app.cloneNode(true);
      screen.removeAttribute("id");
      screen.setAttribute("inert", "");
      let capture = app.querySelector(".capture");
      for (let i = 0; i < 4; i++) {
        const copy = screen.cloneNode(true);
        capture.append(copy);
        capture = copy.querySelector(".capture");
      }
    </script>
  </body>
</html>
